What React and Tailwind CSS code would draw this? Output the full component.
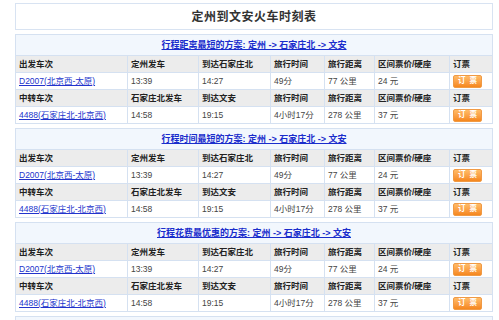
import React from 'react';

const font = { fontFamily: '"Liberation Sans", "Noto Sans CJK SC", sans-serif' };

const plans = [
  '行程距离最短的方案: 定州 -> 石家庄北 -> 文安',
  '行程时间最短的方案: 定州 -> 石家庄北 -> 文安',
  '行程花费最优惠的方案: 定州 -> 石家庄北 -> 文安',
];

const legs = [
  {
    head: ['出发车次', '定州发车', '到达石家庄北', '旅行时间', '旅行距离', '区间票价/硬座', '订票'],
    row: ['D2007(北京西-太原)', '13:39', '14:27', '49分', '77 公里', '24 元'],
  },
  {
    head: ['中转车次', '石家庄北发车', '到达文安', '旅行时间', '旅行距离', '区间票价/硬座', '订票'],
    row: ['4488(石家庄北-北京西)', '14:58', '19:15', '4小时17分', '278 公里', '37 元'],
  },
];

const BookButton = () => (
  <span className="flex h-[13px] w-[29px] items-center justify-center gap-[4px] rounded-[2px] border border-[#f09a45] bg-gradient-to-b from-[#ffbb66] to-[#f5871c] text-[7.5px] font-bold leading-none text-white">
    <span>订</span>
    <span>票</span>
  </span>
);

const PlanTable = ({ title }) => (
  <table className="w-full table-fixed border-separate border-spacing-[1px] bg-[#d5e1f1] text-[8.5px] leading-none">
    <colgroup>
      <col className="w-[111px]" />
      <col className="w-[70px]" />
      <col className="w-[71px]" />
      <col className="w-[53px]" />
      <col className="w-[49px]" />
      <col className="w-[74px]" />
      <col className="w-[42px]" />
    </colgroup>
    <tbody>
      <tr>
        <td colSpan={7} className="h-[20px] bg-[#f2f7fd] p-0 text-center text-[9px] leading-none">
          <a href="#" className="font-bold text-[#1a2dcc] underline">
            {title}
          </a>
        </td>
      </tr>
      {legs.map((leg, i) => (
        <React.Fragment key={i}>
          <tr>
            {leg.head.map((h) => (
              <td key={h} className="h-[16px] bg-[#ececec] p-0 pl-[3px] font-bold text-[#222]">
                {h}
              </td>
            ))}
          </tr>
          <tr>
            {leg.row.map((c, j) => (
              <td key={j} className="h-[16px] bg-white p-0 pl-[3px] text-[#444]">
                {j === 0 ? (
                  <a href="#" className="text-[#2233cc] underline">{c}</a>
                ) : (
                  c
                )}
              </td>
            ))}
            <td className="h-[16px] bg-white p-0 pl-[3px]">
              <BookButton />
            </td>
          </tr>
        </React.Fragment>
      ))}
    </tbody>
  </table>
);

export default function App() {
  return (
    <div className="h-[320px] w-[499px] overflow-hidden bg-white pt-[3px]" style={font}>
      <div className="ml-[15px] w-[478px]">
        <div className="flex h-[27px] items-center justify-center border border-[#d8e3f2] bg-white text-[12px] font-bold tracking-[0.5px] text-[#333]">
          定州到文安火车时刻表
        </div>
        <div className="mt-[4px] flex flex-col gap-[4px]">
          {plans.map((p) => (
            <PlanTable key={p} title={p} />
          ))}
          <div className="h-[20px] border border-[#d5e1f1] bg-[#f2f7fd]" />
        </div>
      </div>
    </div>
  );
}
